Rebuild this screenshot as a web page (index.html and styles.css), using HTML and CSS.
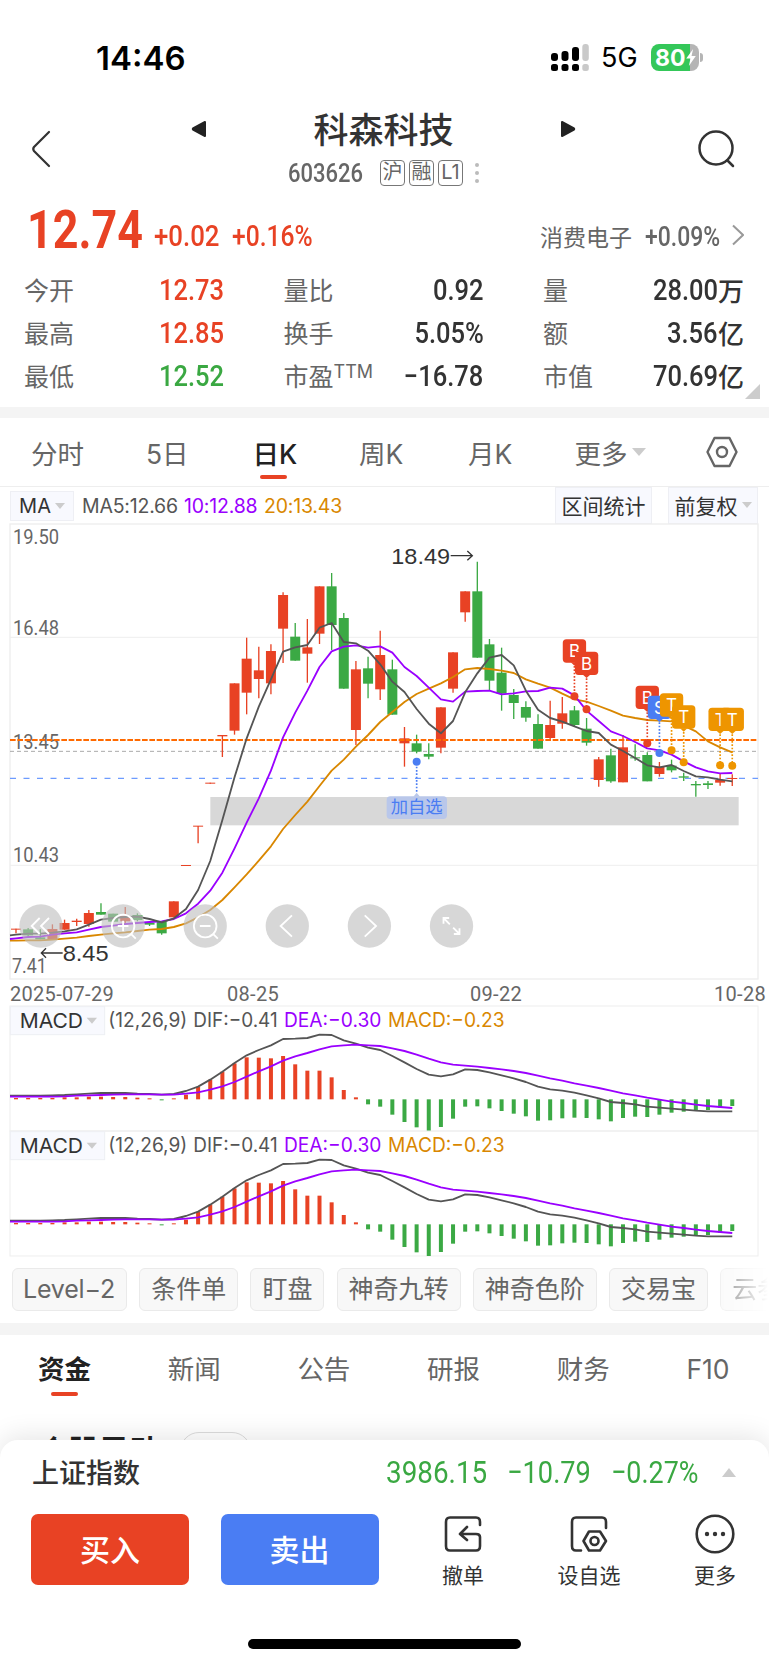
FILE: index.html
```html
<!DOCTYPE html>
<html lang="zh-CN">
<head>
  <meta charset="UTF-8">
  <meta name="viewport" content="width=device-width, initial-scale=1.0">
  <title>科森科技 603626</title>
  <link rel="stylesheet" href="styles.css">
</head>
<body>
  <div class="status">
    <span class="clock">14:46</span>
    <svg class="signal" width="38" height="28" viewBox="0 0 38 28">
      <g fill="#000">
        <rect x="0" y="9" width="7" height="8" rx="3"/><rect x="10.5" y="7" width="7" height="10" rx="3"/><rect x="21" y="3" width="7" height="14" rx="3"/>
        <rect x="0" y="20" width="7" height="7" rx="2.5"/><rect x="10.5" y="20" width="7" height="7" rx="2.5"/><rect x="21" y="20" width="7" height="7" rx="2.5"/>
      </g>
      <g fill="#c9c9c9"><rect x="31.300" y="0" width="6.500" height="17" rx="3"/><rect x="31.300" y="20" width="6.500" height="7" rx="2.500"/></g>
    </svg>
    <span class="net">5G</span>
    <div class="battery">
      <span>80</span>
      <svg width="10" height="17" viewBox="0 0 9 16"><path d="M6.500 0 L0 9 H4 L2.500 16 L9 6.500 H5 Z" fill="#fff"/></svg>
    </div>
    <i class="nub"></i>
  </div>

  <header class="header">
    <svg class="back" width="20" height="38" viewBox="0 0 20 38"><path d="M18 2 L3 17 Q1.500 19 3 21 L18 36" fill="none" stroke="#333" stroke-width="2.200" stroke-linecap="round"/></svg>
    <svg class="prev" width="16" height="18" viewBox="0 0 16 18"><path d="M14 2 V16 L2 9.500 Q1.500 9 2 8.500 Z" fill="#222" stroke="#222" stroke-width="2" stroke-linejoin="round"/></svg>
    <div class="stock">
      <h1>科森科技</h1>
      <div class="code">
        <span class="din">603626</span>
        <b>沪</b><b>融</b><b>L1</b>
        <i class="dots"><i></i><i></i><i></i></i>
      </div>
    </div>
    <svg class="next" width="16" height="18" viewBox="0 0 16 18"><path d="M2 2 V16 L14 9.500 Q14.500 9 14 8.500 Z" fill="#222" stroke="#222" stroke-width="2" stroke-linejoin="round"/></svg>
    <svg class="search" width="40" height="40" viewBox="0 0 40 40" fill="none" stroke="#333" stroke-width="2.500"><circle cx="19" cy="19" r="16.500"/><path d="M30.500 31.500 L36 37" stroke-linecap="round"/></svg>
  </header>

  <section class="quote">
    <div class="price-row red">
      <span class="din price">12.74</span>
      <span class="din chg">+0.02</span>
      <span class="din pct">+0.16%</span>
      <span class="sector">消费电子</span>
      <span class="din sector-pct">+0.09%</span>
      <svg width="12" height="22" viewBox="0 0 12 22"><path d="M1 1.500 L11 11 L1 20.500" fill="none" stroke="#999" stroke-width="2"/></svg>
    </div>
    <div class="stats">
      <div><label>今开</label><span class="din red">12.73</span></div>
      <div><label>量比</label><span class="din">0.92</span></div>
      <div><label>量</label><span class="din">28.00</span><em>万</em></div>
      <div><label>最高</label><span class="din red">12.85</span></div>
      <div><label>换手</label><span class="din">5.05%</span></div>
      <div><label>额</label><span class="din">3.56</span><em>亿</em></div>
      <div><label>最低</label><span class="din green">12.52</span></div>
      <div><label>市盈<sup>TTM</sup></label><span class="din">−16.78</span></div>
      <div><label>市值</label><span class="din">70.69</span><em>亿</em></div>
    </div>
    <i class="corner"></i>
  </section>

  <nav class="periods">
    <span>分时</span>
    <span>5日</span>
    <span class="active">日K</span>
    <span>周K</span>
    <span>月K</span>
    <span class="more">更多<i class="caret"></i></span>
    <svg width="34" height="32" viewBox="0 0 34 32" fill="none" stroke="#666" stroke-width="2.400" stroke-linejoin="round"><path d="M9.500 2 H24.500 L31.500 16 L24.500 30 H9.500 L2.500 16 Z"/><circle cx="17" cy="16" r="5"/></svg>
  </nav>

  <div class="ma-row">
    <div class="tag ma-tag">MA<i class="caret"></i></div>
    <span class="ma5">MA5:12.66</span>
    <span class="ma10">10:12.88</span>
    <span class="ma20">20:13.43</span>
    <div class="tag range">区间统计</div>
    <div class="tag adjust">前复权<i class="caret"></i></div>
  </div>

  <svg id="kline" class="kline" width="748" height="455" viewBox="30 12 2244 1365"></svg>
  <div class="dates">
    <span>2025-07-29</span><span>08-25</span><span>09-22</span><span>10-28</span>
  </div>
  <svg class="macd" width="748" height="125" viewBox="30 79 2244 375"></svg>
  <svg class="macd" width="748" height="125" viewBox="30 79 2244 375"></svg>

  <div class="chips">
    <span class="level">Level−2</span><span>条件单</span><span>盯盘</span><span>神奇九转</span><span>神奇色阶</span><span>交易宝</span><span>云参数</span>
  </div>

  <nav class="tabs">
    <span class="active">资金</span><span>新闻</span><span>公告</span><span>研报</span><span>财务</span><span>F10</span>
  </nav>
  <div class="peek"><b>个股异动</b><i></i></div>

  <footer class="sheet">
    <div class="index green">
      <span class="name">上证指数</span>
      <span class="din i1">3986.15</span>
      <span class="din i2">−10.79</span>
      <span class="din i3">−0.27%</span>
      <i class="up"></i>
    </div>
    <div class="trade">
      <button class="buy">买入</button>
      <button class="sell">卖出</button>
      <div class="act">
        <svg width="40" height="40" viewBox="0 0 40 40" fill="none" stroke="#333" stroke-width="2.600" stroke-linecap="round" stroke-linejoin="round"><path d="M37 11 V8 Q37 3.500 33 3.500 H7 Q3 3.500 3 8 V32 Q3 36.500 7 36.500 H33 Q37 36.500 37 32 V23 Q37 20 33 20 H18 M24 13 L17 20 L24 26"/></svg>
        <span>撤单</span>
      </div>
      <div class="act">
        <svg width="40" height="40" viewBox="0 0 40 40" fill="none" stroke="#333" stroke-width="2.600" stroke-linecap="round" stroke-linejoin="round"><path d="M37 14 V8 Q37 3.500 33 3.500 H7 Q3 3.500 3 8 V32 Q3 36.500 7 36.500 H12"/><path d="M20 17.500 H31 L37 27 L31 36.500 H20 L14.500 27 Z"/><circle cx="25.500" cy="27" r="4"/></svg>
        <span>设自选</span>
      </div>
      <div class="act">
        <svg width="40" height="40" viewBox="0 0 40 40"><circle cx="20" cy="20" r="18.300" fill="none" stroke="#333" stroke-width="2.600"/><g fill="#333"><circle cx="12" cy="20" r="2.200"/><circle cx="20" cy="20" r="2.200"/><circle cx="28" cy="20" r="2.200"/></g></svg>
        <span>更多</span>
      </div>
    </div>
    <i class="home"></i>
  </footer>

  <script src="chart.js"></script>
</body>
</html>
```

FILE: styles.css
```css
* {
  box-sizing: border-box;
}
body {
  margin: 0;
  width: 769px;
  height: 1665px;
  overflow: hidden;
  background: #fff;
  color: #333;
  font-family: Inter, "Noto Sans CJK SC", sans-serif;
  display: flex;
  flex-direction: column;
}
i, em {
  font-style: normal;
}
svg {
  display: block;
  flex: none;
}
.red {
  color: #e84224;
}
.green {
  color: #3aa842;
}
/* narrow numerals */
.din {
  display: inline-block;
  font-family: Roboto, sans-serif;
  white-space: nowrap;
  transform: scaleX(0.85);
  transform-origin: left center;
}

/* status bar */
.status {
  height: 100px;
  flex: none;
  display: flex;
  align-items: center;
  padding: 15px 0 0 96px;
}
.clock {
  width: 455px;
  font-size: 33px;
  font-weight: 600;
  color: #000;
}
.net {
  width: 50px;
  margin-left: 12px;
  font-size: 27px;
  color: #000;
}
.battery {
  width: 48px;
  height: 27px;
  border-radius: 8px;
  background: linear-gradient(to right, #34c759 39px, #b5b5b5 39px);
  display: flex;
  align-items: center;
  padding-left: 4px;
}
.battery span {
  font-size: 23px;
  font-weight: 700;
  color: #fff;
}
.battery svg {
  margin-left: 1px;
}
.nub {
  width: 3px;
  height: 9px;
  margin-left: 1px;
  border-radius: 0 3px 3px 0;
  background: #b5b5b5;
}

/* title */
.header {
  height: 97px;
  flex: none;
  display: flex;
  align-items: flex-start;
}
.back {
  margin: 30px 0 0 31px;
}
.prev {
  margin: 20px 0 0 140px;
}
.next {
  margin: 20px 0 0 0;
}
.search {
  margin: 29px 0 0 121px;
}
.stock {
  width: 353px;
  padding-top: 9px;
}
.stock h1 {
  margin: 0;
  font-size: 35px;
  line-height: 42px;
  font-weight: 500;
  text-align: center;
}
.code {
  display: flex;
  align-items: center;
  height: 26px;
  margin: 9px 0 0 81px;
  color: #666;
}
.code .din {
  width: 92px;
  font-size: 25px;
  font-weight: 500;
  transform: scaleX(0.88);
}
.code b {
  width: 25px;
  height: 26px;
  margin-right: 4px;
  border: 1.5px solid #777;
  border-radius: 4px;
  font-size: 20px;
  font-weight: 400;
  line-height: 22px;
  text-align: center;
}
.dots {
  display: grid;
  gap: 4px;
  margin-left: 8px;
}
.dots i {
  width: 4px;
  height: 4px;
  border-radius: 2px;
  background: #bbb;
}

/* quote */
.quote {
  position: relative;
  height: 221px;
  flex: none;
  border-bottom: 11px solid #f4f4f4;
}
.price-row {
  height: 71px;
  display: flex;
  align-items: baseline;
  padding-left: 27px;
  line-height: 62px;
}
.price {
  width: 127px;
  font-size: 54px;
  font-weight: 700;
  transform: translateY(2px) scaleX(0.83);
}
.chg, .pct, .sector-pct {
  font-size: 29px;
  font-weight: 500;
}
.chg {
  width: 78px;
  transform: scaleX(0.89);
}
.pct {
  width: 308px;
}
.sector {
  width: 105px;
  font-size: 23px;
  color: #666;
}
.sector-pct {
  width: 87px;
  font-size: 27px;
  color: #666;
}
.stats {
  display: grid;
  grid-template-columns: 200px 200px 201px;
  column-gap: 59.5px;
  grid-auto-rows: 43px;
  padding-left: 24px;
}
.stats div {
  display: flex;
  align-items: center;
}
.stats label {
  flex: 1;
  padding-bottom: 2px;
  font-size: 25px;
  color: #666;
}
.stats sup {
  font-size: 18px;
  line-height: 0;
  vertical-align: 8px;
}
.stats .din {
  font-size: 29px;
  font-weight: 500;
  transform: scaleX(0.88);
  transform-origin: right center;
}
.stats em {
  padding-bottom: 1px;
  font-size: 26px;
  font-weight: 500;
}
.corner {
  position: absolute;
  right: 9px;
  bottom: 8px;
  border-left: 15px solid transparent;
  border-bottom: 15px solid #ccc;
}

/* period tabs */
.periods {
  height: 69px;
  flex: none;
  display: flex;
  align-items: center;
  border-bottom: 1px solid #eee;
  padding: 0 0 0 31px;
  font-size: 26.5px;
  color: #666;
}
.periods span {
  position: relative;
  width: 106.500px;
}
.periods span:nth-child(1) { width: 115px; }
.periods span:nth-child(4) { width: 109px; }
.periods .more {
  display: flex;
  align-items: center;
  gap: 4px;
  width: 130px;
}
.more .caret {
  border-width: 8px 7px 0;
}
.active {
  color: #222;
  font-weight: 500;
}
.active::after {
  content: "";
  position: absolute;
  left: 7px;
  bottom: -7px;
  width: 27px;
  height: 4px;
  border-radius: 2px;
  background: #e84224;
}
.caret {
  display: inline-block;
  border: 6px solid transparent;
  border-top: 8px solid #ccc;
  border-bottom: 0;
}

/* indicator row */
.ma-row {
  height: 37px;
  flex: none;
  display: flex;
  align-items: center;
  padding-left: 10px;
  font-size: 19.500px;
  color: #555;
}
.tag {
  height: 37px;
  display: flex;
  align-items: center;
  justify-content: center;
  padding-bottom: 2px;
  background: #f8f9fe;
  border: 1px solid #eeeff4;
  color: #333;
  font-size: 21px;
}
.tag .caret {
  border-width: 6px 5px 0;
  margin-left: 4px;
}
.ma-tag {
  width: 64px;
  height: 30px;
  margin-right: 8px;
  padding-bottom: 0;
  font-size: 20px;
}
.ma-row span {
  letter-spacing: -0.2px;
}
.ma5 { width: 102px; }
.ma10 { width: 80px; color: #9a00ff; }
.ma20 { width: 291px; color: #d98700; }
.range {
  width: 97px;
  margin-right: 16px;
}
.adjust {
  width: 90px;
}

/* charts */
.kline, .macd {
  margin-left: 10px;
  overflow: visible;
}
.dates {
  height: 27px;
  flex: none;
  display: flex;
  padding-left: 10px;
  font-family: Roboto, sans-serif;
  font-size: 20px;
  line-height: 30px;
  letter-spacing: 0.3px;
  color: #666;
}
.dates span:nth-child(1) { width: 217px; }
.dates span:nth-child(2) { width: 243px; }
.dates span:nth-child(3) { width: 244px; }

/* chips */
.chips {
  height: 79px;
  flex: none;
  display: flex;
  gap: 12.200px;
  padding: 12px 0 0 12px;
  border-bottom: 12px solid #f4f4f4;
  white-space: nowrap;
  overflow: hidden;
}
.chips span {
  flex: none;
  height: 43px;
  padding: 0 11px;
  border: 1px solid #eaeaea;
  border-radius: 6px;
  background: #f8f8f8;
  font-size: 25px;
  line-height: 41px;
  color: #666;
}
.chips .level {
  width: 115px;
  padding-left: 10px;
  letter-spacing: -0.2px;
}
.chips span:last-child {
  -webkit-mask-image: linear-gradient(to right, rgba(0,0,0,0.7), transparent 48px);
  mask-image: linear-gradient(to right, rgba(0,0,0,0.7), transparent 48px);
}

/* content tabs */
.tabs {
  height: 94px;
  flex: none;
  display: flex;
  padding: 15px 0 0 38px;
  font-size: 26.500px;
  line-height: 38px;
  color: #666;
}
.tabs span {
  position: relative;
  flex: none;
  width: 129.700px;
  height: 38px;
}
.tabs .active {
  font-weight: 600;
  color: #222;
}
.tabs .active::after {
  left: 13px;
  bottom: -8px;
}
.peek {
  height: 11px;
  flex: none;
  display: flex;
  padding-left: 38px;
}
.peek b {
  width: 142px;
  font-size: 30.500px;
  line-height: 43px;
  color: #222;
}
.peek i {
  width: 71px;
  height: 38px;
  margin-top: 3px;
  border: 1px solid #ddd;
  border-radius: 19px;
}

/* bottom sheet */
.sheet {
  position: relative;
  flex: 1;
  background: #fff;
  border-radius: 18px 18px 0 0;
  box-shadow: 0 -4px 26px rgba(0,0,0,0.1);
}
.index {
  height: 74px;
  display: flex;
  align-items: center;
  padding: 0 0 9px 32px;
}
.name {
  width: 354px;
  padding-bottom: 2px;
  font-size: 27px;
  font-weight: 500;
  color: #333;
}
.index .din {
  padding-bottom: 1px;
  font-size: 32px;
}
.index .i1 {
  width: 121px;
  transform: scaleX(0.87);
}
.i2 { width: 104px; }
.index .i3 {
  width: 111px;
  transform: scaleX(0.84);
}
.up {
  border: 7px solid transparent;
  border-bottom: 9px solid #ccc;
  border-top: 0;
}
.trade {
  display: flex;
  padding-left: 31px;
}
.trade button {
  flex: none;
  width: 158px;
  height: 71px;
  padding: 0 0 3px;
  margin-right: 31.500px;
  border: none;
  border-radius: 7px;
  font: 500 30px "Noto Sans CJK SC", sans-serif;
  color: #fff;
}
.buy { background: #e84224; }
.sell { background: #4a7df3; }
.act {
  flex: none;
  width: 126px;
  display: flex;
  flex-direction: column;
  align-items: center;
  font-size: 21px;
}
.act span {
  line-height: 30px;
  margin-top: 7px;
}
.sell + .act {
  margin-left: -10px;
}
.home {
  position: absolute;
  left: 248px;
  bottom: 16px;
  width: 273px;
  height: 10px;
  border-radius: 5px;
  background: #000;
}
```

FILE: chart.js
```js
const RED = '#e84224', GREEN = '#3ba944', DARK = '#555', PURPLE = '#9a00ff', ORANGE = '#d98700';
const STEP = 36.42;
const cx = i => 48 + STEP * i;

// colour, body top, body bottom, wick top, wick bottom
const candles = [
  ['r',1226,1229,1226,1240],['g',1228,1246,1224,1250],['g',1252,1258,1228,1258],['r',1227,1258,1213,1258],
  ['r',1209,1229,1199,1229],['r',1202,1206,1196,1218],['r',1179,1212,1170,1220],['g',1176,1184,1150,1184],
  ['g',1181,1205,1181,1205],['r',1188,1204,1161,1210],['g',1185,1200,1180,1204],['g',1208,1214,1205,1218],
  ['g',1204,1240,1204,1244],['r',1144,1192,1144,1192],['r',1035,1038,1036,1037],['r',917,920,918,970],
  ['r',788,791,788,791],['r',645,649,646,711],['r',490,632,490,644],['r',416,518,353,583],
  ['r',451,477,380,535],['r',393,490,373,523],['r',225,326,217,429],['g',350,422,309,422],
  ['r',382,401,297,488],['r',199,341,199,372],['g',199,315,159,390],['g',294,506,279,506],
  ['r',448,630,423,675],['g',445,491,410,535],['r',405,508,332,540],['g',448,584,419,584],
  ['r',655,670,621,740],['g',670,695,644,700],['g',702,710,670,718],['r',562,683,562,700],
  ['r',397,506,397,518],['r',214,277,214,305],['g',214,413,125,413],['g',373,482,357,510],
  ['g',458,521,383,572],['g',525,549,507,597],['g',561,593,544,605],['g',612,686,583,686],
  ['r',615,654,542,662],['r',580,611,531,626],['g',571,615,558,620],['g',626,668,594,677],
  ['r',718,780,711,800],['g',706,784,686,788],['r',682,787,645,787],['g',712,715,673,722],
  ['g',705,784,697,784],['r',740,762,726,770],['g',737,751,719,757],['g',769,773,758,783],
  ['g',792,796,783,830],['g',790,795,783,807],['r',780,788,762,797],['r',774,777,763,798]
];
const ma5 = [1244,1241,1241,1238,1234,1228,1214,1199,1194,1191,1190,1197,1207,1195,1167,1110,1023,900,772,655,560,478,395,382,375,323,309,366,370,392,433,485,516,567,611,640,603,517,460,413,405,436,512,569,594,605,619,633,639,674,693,714,736,742,735,753,769,772,779,784];
const ma10 = [1255,1251,1250,1244,1240,1237,1229,1221,1217,1212,1209,1206,1204,1197,1180,1151,1112,1058,985,908,835,752,652,578,512,441,394,380,376,383,379,398,441,468,503,538,545,515,513,512,523,520,514,513,503,506,526,572,603,634,648,666,685,691,704,724,742,754,760,759];
const ma20 = [1262,1261,1261,1259,1256,1253,1248,1244,1240,1237,1233,1229,1227,1221,1210,1192,1170,1140,1102,1063,1022,979,927,885,845,798,752,719,680,645,606,576,546,522,506,490,471,448,444,447,452,459,478,491,503,521,538,545,558,572,587,594,600,602,604,617,634,664,682,697];

const dif = [348,348,348,347,346,344,342,340,340,340,342,343,345,343,334,321,300,276,250,227,211,197,178,177,175,165,166,182,192,204,211,229,248,268,285,290,284,269,271,278,287,296,307,321,329,333,339,347,356,367,370,374,381,384,387,390,393,395,395,395];
const dea = [351,351,351,351,350,348,347,346,345,344,344,344,345,345,342,338,330,320,307,291,275,260,243,230,220,209,200,197,195,197,199,206,214,225,237,248,255,258,261,265,269,274,280,288,296,303,311,318,325,333,341,347,354,360,366,370,375,379,382,385];
const hist = [355,355,355,355,353,353,351,351,352,352,354,356,362,356,345,322,300,276,251,233,234,236,229,254,273,273,293,331,353,374,381,405,427,443,454,442,417,381,380,386,394,402,410,423,422,416,414,415,419,425,415,411,412,405,399,396,392,391,384,379];

function line(data, color, start) {
  const pts = [`30,${start}`].concat(data.map((v, i) => `${cx(i).toFixed(1)},${v}`));
  return `<polyline points="${pts.join(' ')}" fill="none" stroke="${color}" stroke-width="5.500" stroke-linejoin="round"/>`;
}
function rule(y, color, width, dash) {
  return `<path d="M30 ${y} H2274" stroke="${color}" stroke-width="${width}" stroke-dasharray="${dash || 'none'}"/>`;
}
function text(str, x, y, w, size, color, font) {
  return `<text x="${x}" y="${y}" textLength="${w}" lengthAdjust="spacingAndGlyphs" font-size="${size}" fill="${color}" font-family="${font || 'Inter'}">${str}</text>`;
}

// B / S / T trade marks: letter, candle index, badge top, dot y, colour
const marks = [
  ['B',46,358,529,RED],['B',47,395,568,RED],['B',52,497,670,RED],['S',53,527,699,'#4a7df3'],
  ['T',54,520,691,'#ee9500'],['T',55,556,727,'#ee9500'],['T',58,563,736,'#ee9500'],['T',59,563,737,'#ee9500']
];
function mark([ch, i, top, dot, color]) {
  const x = cx(i);
  return `<path d="M${x} ${top + 80} V${dot}" stroke="${color}" stroke-width="5" stroke-dasharray="5 5"/>
    <circle cx="${x}" cy="${dot}" r="12" fill="${color}"/>
    <rect x="${x - 35}" y="${top}" width="70" height="70" rx="11" fill="${color}"/>
    <path d="M${x - 11} ${top + 69} h22 l-11 10 z" fill="${color}"/>
    <text x="${x}" y="${top + 54}" text-anchor="middle" font-size="51" fill="#fff" font-family="Inter">${ch}</text>`;
}

function drawKline() {
  let s = '<rect x="30" y="12" width="2244" height="1365" fill="none" stroke="#eee" stroke-width="4"/>';
  s += rule(352, '#eee', 3) + rule(1036, '#eee', 3);
  s += '<rect x="631" y="831" width="1585" height="85" fill="#d8d8d8"/>';
  s += rule(694, '#aaa', 3, '12 9') + rule(775, '#6d9bff', 3.5, '18 22.5');
  [['19.50',73],['16.48',345],['13.45',687],['10.43',1027]].forEach(([t, y]) => {
    s += text(t, 39, y, 138, 62, '#666', 'Roboto');
  });
  s += text('7.41', 36, 1358, 104, 62, '#666', 'Roboto');
  candles.forEach(([c, top, bottom, high, low], i) => {
    const color = c === 'r' ? RED : GREEN;
    s += `<path d="M${cx(i)} ${high} V${low}" stroke="${color}" stroke-width="4"/>`;
    s += `<rect x="${cx(i) - 15}" y="${top}" width="30" height="${bottom - top}" fill="${color}"/>`;
  });
  s += rule(660, '#ff6a00', 6, '17 5');
  s += line(ma20, ORANGE, 1262) + line(ma10, PURPLE, 1257) + line(ma5, DARK, 1246);
  s += text('18.49', 1174, 132, 176, 66, '#333', 'Liberation Sans');
  s += '<path d="M1352 107 H1416 M1402 93 L1417 107 L1402 121" fill="none" stroke="#333" stroke-width="4"/>';
  s += text('8.45', 188, 1323, 138, 66, '#333', 'Liberation Sans');
  s += '<path d="M188 1299 H125 M138 1285 L124 1299 L138 1313" fill="none" stroke="#333" stroke-width="4"/>';
  marks.forEach(m => { s += mark(m); });

  // added to watchlist
  s += '<path d="M1250 740 V820" stroke="#4a7df3" stroke-width="5" stroke-dasharray="5 5"/><circle cx="1250" cy="725" r="12" fill="#4a7df3"/>';
  s += '<path d="M1240 830 l10 -12 l10 12 z" fill="#b9c7ea"/><rect x="1160" y="829" width="181" height="68" rx="11" fill="#b9c7ea"/>';
  s += text('加自选', 1172, 880, 156, 52, '#4a7df3', 'Noto Sans CJK SC');

  const icons = [
    '<path d="M-4 -24 L-28 0 L-4 24 M24 -24 L0 0 L24 24"/>',
    '<circle r="34"/><path d="M-16 0 H16 M0 -16 V16 M25 25 L38 38"/>',
    '<circle r="34"/><path d="M-16 0 H16 M25 25 L38 38"/>',
    '<path d="M14 -32 L-20 0 L14 32"/>',
    '<path d="M-14 -32 L20 0 L-14 32"/>',
    '<path d="M-24 -7 V-24 H-7 M-24 -24 L-5 -5 M24 7 V24 H7 M24 24 L5 5"/>'
  ];
  icons.forEach((d, i) => {
    s += `<g transform="translate(${123 + i * 246.3} 1218)" fill="none" stroke="#fff" stroke-width="5.500"><circle r="65" fill="rgba(190,190,190,0.62)" stroke="none"/>${d}</g>`;
  });
  document.getElementById('kline').innerHTML = s;
}

function drawMacd(svg) {
  let s = '<rect x="30" y="79" width="2244" height="375" fill="none" stroke="#eee" stroke-width="3"/>';
  s += '<rect x="31" y="81" width="283" height="84" fill="#f8f9fe" stroke="#eeeff4" stroke-width="3"/>';
  s += '<path d="M260 114 h31 l-15 18 z" fill="#ccc"/>';
  s += text('MACD', 59, 146, 190, 62, '#333');
  s += text('(12,26,9)', 325, 142, 237, 59, '#555');
  s += text('DIF:−0.41', 580, 142, 253, 59, '#555');
  s += text('DEA:−0.30', 852, 142, 292, 59, PURPLE);
  s += text('MACD:−0.23', 1164, 142, 350, 59, ORANGE);
  hist.forEach((v, i) => {
    s += `<rect x="${cx(i) - 6}" y="${Math.min(v, 359)}" width="12" height="${Math.abs(v - 359)}" fill="${v < 359 ? RED : GREEN}"/>`;
  });
  s += line(dif, DARK, 348) + line(dea, PURPLE, 351);
  svg.innerHTML = s;
}

drawKline();
document.querySelectorAll('.macd').forEach(drawMacd);
```
